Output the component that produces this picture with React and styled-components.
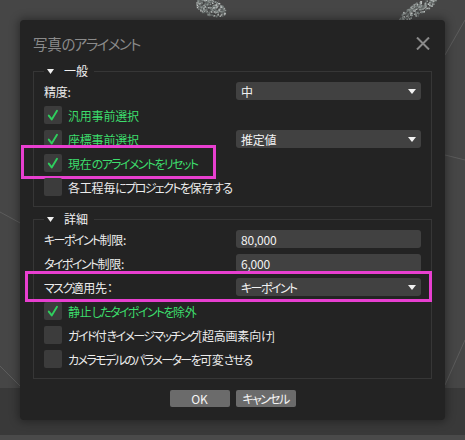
import React from "react";
import styled, { createGlobalStyle } from "styled-components";

const GlobalStyle = createGlobalStyle`
  html, body { margin: 0; padding: 0; background: #464646; }
  body {
    font-family: "Noto Sans CJK JP", "Noto Sans", sans-serif;
    font-feature-settings: "palt" 1;
  }
  * { box-sizing: border-box; }
`;

const Page = styled.div`
  position: relative;
  width: 465px;
  height: 440px;
  overflow: hidden;
  background: #464646;
  padding: 20px;
`;

const Scene = styled.svg`
  position: absolute;
  left: 0;
  top: 0;
  width: 465px;
  height: 440px;
`;

const Dialog = styled.div`
  position: relative;
  z-index: 1;
  width: 425px;
  height: 400px;
  background: #232323;
  border-radius: 4px;
  box-shadow: 0 0 8px 2px rgba(0, 0, 0, 0.35);
  padding: 0 13px;
  display: flex;
  flex-direction: column;
`;

const TitleBar = styled.div`
  height: 43px;
  padding-top: 3px;
  display: flex;
  align-items: center;
  justify-content: space-between;
`;

const Title = styled.div`
  font-size: 14.5px;
  letter-spacing: -0.3px;
  color: #8a8a8a;
  font-feature-settings: "palt" 1;
  white-space: nowrap;
`;

const CloseButton = styled.div`
  width: 14px;
  height: 14px;
  margin-right: 2px;
  display: flex;
  align-items: center;
  justify-content: center;
`;

const Group = styled.fieldset`
  margin: 0 0 ${(p) => p.$gapAfter || 0}px 0;
  padding: 3px 10px 10px 10px;
  border: 1px solid #363636;
  display: flex;
  flex-direction: column;
  gap: 6px;
  min-width: 0;
`;

const Legend = styled.legend`
  padding: 0 6px 0 3px;
  height: 16px;
  line-height: 16px;
  font-size: 12px;
  color: #f0f0f0;
  display: flex;
  align-items: center;
  gap: 10px;
`;

const Row = styled.div`
  position: relative;
  height: 18px;
  display: flex;
  align-items: center;
`;

const Label = styled.div`
  width: 192px;
  flex: none;
  font-size: 12px;
  letter-spacing: -0.2px;
  color: #ececec;
  white-space: nowrap;
`;

const CheckLabel = styled.label`
  display: flex;
  align-items: center;
  gap: 6px;
  width: ${(p) => (p.$narrow ? "192px" : "auto")};
  flex: none;
  font-size: 12px;
  letter-spacing: -0.2px;
  color: ${(p) => (p.$on ? "#3ddd6c" : "#ececec")};
  white-space: nowrap;
`;

const Kana = styled.span`
  letter-spacing: ${(p) => p.$ls || -1.6}px;
`;

const Box = styled.span`
  width: 18px;
  height: 18px;
  border-radius: 2px;
  background: #3c3c3c;
  display: flex;
  align-items: center;
  justify-content: center;
  flex: none;
`;

const Field = styled.div`
  flex: 1;
  height: 18px;
  border-radius: 3px;
  background: #414141;
  padding: 0 5px;
  display: flex;
  align-items: center;
  justify-content: space-between;
  font-size: 12px;
  letter-spacing: -0.2px;
  color: #f2f2f2;
  white-space: nowrap;
`;

const Highlight = styled.div`
  position: absolute;
  left: ${(p) => p.$left}px;
  top: ${(p) => p.$top}px;
  height: ${(p) => p.$height}px;
  ${(p) => (p.$width ? `width: ${p.$width}px;` : `right: ${p.$right}px;`)}
  border: 3px solid #e83fd0;
  pointer-events: none;
`;

const Buttons = styled.div`
  margin-top: 11px;
  display: flex;
  justify-content: center;
  gap: 6px;
`;

const Button = styled.button`
  width: 60px;
  height: 17px;
  padding: 0;
  border: none;
  border-radius: 2px;
  background: #6b6b6b;
  color: #f4f4f4;
  font-family: inherit;
  font-size: 12px;
  font-feature-settings: "palt" 1;
  line-height: 17px;
  white-space: nowrap;
`;

const KANA = /([\u3040-\u30ff]+)/;

const T = ({ children, ls }) => {
  const parts = String(children).split(KANA);
  return (
    <span>
      {parts.map((p, i) =>
        i % 2 === 1 ? (
          <Kana key={i} $ls={ls}>
            {p}
          </Kana>
        ) : (
          p
        )
      )}
    </span>
  );
};

const Arrow = () => (
  <svg width="8" height="5" viewBox="0 0 8 5">
    <path d="M0 0 H8 L4 5 Z" fill="#f2f2f2" />
  </svg>
);

const Tri = () => (
  <svg width="7" height="5" viewBox="0 0 7 5">
    <path d="M0 0 H7 L3.5 5 Z" fill="#f0f0f0" />
  </svg>
);

const Check = ({ on }) => (
  <Box>
    {on && (
      <svg width="18" height="18" viewBox="0 0 18 18">
        <path d="M4.8 9.6 L7.7 13.4 L13 4.8" fill="none" stroke="#2fcf5e" strokeWidth="1.9" strokeLinecap="round" strokeLinejoin="round" />
      </svg>
    )}
  </Box>
);

const CheckItem = ({ on, narrow, children }) => (
  <CheckLabel $on={on} $narrow={narrow}>
    <Check on={on} />
    <T>{children}</T>
  </CheckLabel>
);

function rand(seed) {
  let s = seed;
  return () => {
    s = (s * 16807) % 2147483647;
    return (s - 1) / 2147483646;
  };
}

function blob(seed, cx, cy, rx, ry, angle, n) {
  const r = rand(seed);
  const out = [];
  const cols = ["#8a9290", "#6d7472", "#a4aaa8", "#5a605f", "#c0c4c2", "#777e7c"];
  for (let i = 0; i < n; i++) {
    const t = r() * Math.PI * 2;
    const d = Math.sqrt(r());
    const x0 = Math.cos(t) * rx * d;
    const y0 = Math.sin(t) * ry * d;
    const x = cx + x0 * Math.cos(angle) - y0 * Math.sin(angle);
    const y = cy + x0 * Math.sin(angle) + y0 * Math.cos(angle);
    out.push(<rect key={seed + "-" + i} x={x.toFixed(1)} y={y.toFixed(1)} width="1.4" height="1.4" fill={cols[Math.floor(r() * cols.length)]} />);
  }
  return out;
}

const Background = () => (
  <Scene viewBox="0 0 465 440">
    <rect x="0" y="0" width="465" height="440" fill="#464646" />
    <rect x="0" y="388" width="465" height="47" fill="#393939" />
    <rect x="0" y="435" width="465" height="5" fill="#4a4a4a" />
    <line x1="0" y1="212" x2="22" y2="224" stroke="#5c5c5c" strokeWidth="1" />
    <line x1="0" y1="366" x2="22" y2="388" stroke="#5c5c5c" strokeWidth="1" />
    <line x1="445" y1="385" x2="465" y2="340" stroke="#5c5c5c" strokeWidth="1" />
    <line x1="445" y1="155" x2="465" y2="160" stroke="#5c5c5c" strokeWidth="1" />
    <line x1="445" y1="55" x2="465" y2="20" stroke="#5c5c5c" strokeWidth="1" />
    <line x1="218" y1="0" x2="224" y2="14" stroke="#5a5a5a" strokeWidth="1" />
    {blob(7, 210, 7, 16, 8, 0.35, 260)}
    {blob(13, 418, 8, 22, 6, -0.55, 220)}
  </Scene>
);

export default function App() {
  return (
    <>
      <GlobalStyle />
      <Page>
        <Background />
        <Dialog>
          <TitleBar>
            <Title>
              <T ls={-1.6}>写真のアライメント</T>
            </Title>
            <CloseButton>
              <svg width="14" height="13" viewBox="0 0 14 13">
                <path d="M1 0.5 L13 12.5 M13 0.5 L1 12.5" stroke="#8a8a8a" strokeWidth="2" />
              </svg>
            </CloseButton>
          </TitleBar>

          <Group $gapAfter={4}>
            <Legend>
              <Tri />
              一般
            </Legend>
            <Row>
              <Label>精度:</Label>
              <Field>
                中<Arrow />
              </Field>
            </Row>
            <Row>
              <CheckItem on>汎用事前選択</CheckItem>
            </Row>
            <Row>
              <CheckItem on narrow>座標事前選択</CheckItem>
              <Field>
                推定値<Arrow />
              </Field>
            </Row>
            <Row>
              <CheckItem on>現在のアライメントをリセット</CheckItem>
              <Highlight $left={-23} $top={-9} $height={34} $width={195} />
            </Row>
            <Row>
              <CheckItem>各工程毎にプロジェクトを保存する</CheckItem>
            </Row>
          </Group>

          <Group>
            <Legend>
              <Tri />
              詳細
            </Legend>
            <Row>
              <Label>
                <T>キーポイント制限:</T>
              </Label>
              <Field>80,000</Field>
            </Row>
            <Row>
              <Label>
                <T>タイポイント制限:</T>
              </Label>
              <Field>6,000</Field>
            </Row>
            <Row>
              <Label>
                <T>マスク適用先：</T>
              </Label>
              <Field>
                <T>キーポイント</T>
                <Arrow />
              </Field>
              <Highlight $left={-19} $top={-7} $height={31} $right={-11} />
            </Row>
            <Row>
              <CheckItem on>静止したタイポイントを除外</CheckItem>
            </Row>
            <Row>
              <CheckItem>ガイド付きイメージマッチング[超高画素向け]</CheckItem>
            </Row>
            <Row>
              <CheckItem>カメラモデルのパラメーターを可変させる</CheckItem>
            </Row>
          </Group>

          <Buttons>
            <Button>OK</Button>
            <Button>
              <T>キャンセル</T>
            </Button>
          </Buttons>
        </Dialog>
      </Page>
    </>
  );
}
